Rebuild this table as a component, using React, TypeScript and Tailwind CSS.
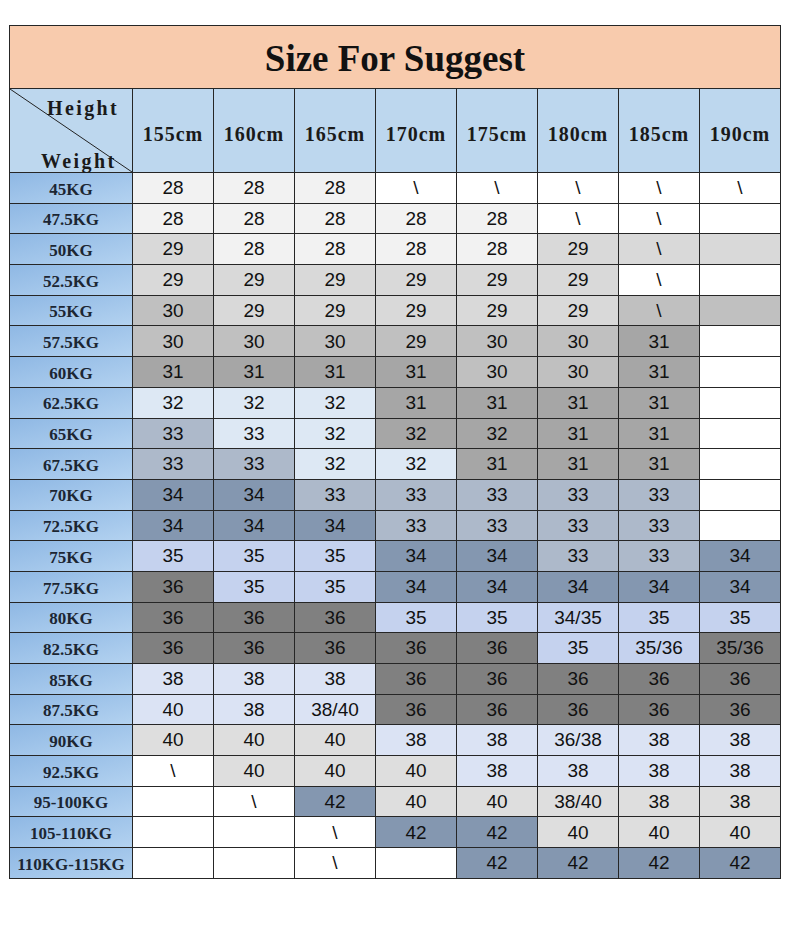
import React from "react";

type Cell = [string, string];

const colors: Record<string, string> = {
  W: "bg-white",
  A: "bg-[#f2f2f2]",
  B: "bg-[#d9d9d9]",
  C: "bg-[#c0c0c0]",
  D: "bg-[#a6a6a6]",
  L: "bg-[#dde8f4]",
  G: "bg-[#adb9ca]",
  S: "bg-[#8497b0]",
  P: "bg-[#c5d2ee]",
  K: "bg-[#808080]",
  E: "bg-[#dbe3f4]",
  Y: "bg-[#dedede]",
};

const heights = ["155cm", "160cm", "165cm", "170cm", "175cm", "180cm", "185cm", "190cm"];

// each row: weight label, then "value:colour" per height
const rows: [string, string][] = [
  ["45KG", "28A 28A 28A \\W \\W \\W \\W \\W"],
  ["47.5KG", "28A 28A 28A 28A 28A \\W \\W W"],
  ["50KG", "29B 28A 28A 28A 28A 29B \\B B"],
  ["52.5KG", "29B 29B 29B 29B 29B 29B \\W W"],
  ["55KG", "30C 29B 29B 29B 29B 29B \\C C"],
  ["57.5KG", "30C 30C 30C 29C 30C 30C 31D W"],
  ["60KG", "31D 31D 31D 31D 30C 30C 31D W"],
  ["62.5KG", "32L 32L 32L 31D 31D 31D 31D W"],
  ["65KG", "33G 33L 32L 32D 32D 31D 31D W"],
  ["67.5KG", "33G 33G 32L 32L 31D 31D 31D W"],
  ["70KG", "34S 34S 33G 33G 33G 33G 33G W"],
  ["72.5KG", "34S 34S 34S 33G 33G 33G 33G W"],
  ["75KG", "35P 35P 35P 34S 34S 33G 33G 34S"],
  ["77.5KG", "36K 35P 35P 34S 34S 34S 34S 34S"],
  ["80KG", "36K 36K 36K 35P 35P 34/35P 35P 35P"],
  ["82.5KG", "36K 36K 36K 36K 36K 35P 35/36P 35/36K"],
  ["85KG", "38E 38E 38E 36K 36K 36K 36K 36K"],
  ["87.5KG", "40E 38E 38/40E 36K 36K 36K 36K 36K"],
  ["90KG", "40Y 40Y 40Y 38E 38E 36/38E 38E 38E"],
  ["92.5KG", "\\W 40Y 40Y 40Y 38E 38E 38E 38E"],
  ["95-100KG", "W \\W 42S 40Y 40Y 38/40Y 38Y 38Y"],
  ["105-110KG", "W W \\W 42S 42S 40Y 40Y 40Y"],
  ["110KG-115KG", "W W \\W W 42S 42S 42S 42S"],
];

const parse = (s: string): Cell[] =>
  s.split(" ").map((t) => [t.slice(0, -1), t.slice(-1)] as Cell);

export default function App() {
  return (
    <div className="min-h-[929px] w-[790px] bg-white pt-[25px] pl-[9px]">
      <div className="grid w-[772px] grid-cols-[122px_repeat(8,80px)] grid-rows-[62px_83px_repeat(23,29.7px)] gap-px bg-[#262626] p-px">
        <div className="col-span-9 flex items-center justify-center bg-[#f8cbad] pt-[3px] font-['Liberation_Serif',serif] text-[37px] font-bold text-[#111]">
          Size For Suggest
        </div>

        <div className="relative bg-[#bdd7ee] font-['Liberation_Serif',serif] text-[20px] font-bold tracking-[2.4px] text-[#1a1a1a]">
          <svg className="absolute inset-0 h-full w-full" viewBox="0 0 122 83" preserveAspectRatio="none">
            <line x1="0" y1="0" x2="122" y2="83" stroke="#222" strokeWidth="1" />
          </svg>
          <span className="absolute left-[37px] top-[9px] leading-none">Height</span>
          <span className="absolute left-[31px] top-[62px] leading-none">Weight</span>
        </div>
        {heights.map((h) => (
          <div
            key={h}
            className="flex items-center justify-center bg-[#bdd7ee] pt-[7px] font-['Liberation_Serif',serif] text-[20px] font-bold tracking-[1px] text-[#1a1a1a]"
          >
            {h}
          </div>
        ))}

        {rows.map(([w, data]) => (
          <React.Fragment key={w}>
            <div className="flex items-center justify-center bg-gradient-to-br from-[#8fb8e4] to-[#b3d2f0] pt-[3px] font-['Liberation_Serif',serif] text-[17px] font-bold text-[#1c2633]">
              {w}
            </div>
            {parse(data).map(([v, c], i) => (
              <div
                key={i}
                className={`flex items-center justify-center pt-px font-['Liberation_Sans',sans-serif] text-[19px] text-[#111] ${colors[c]}`}
              >
                {v}
              </div>
            ))}
          </React.Fragment>
        ))}
      </div>
    </div>
  );
}
